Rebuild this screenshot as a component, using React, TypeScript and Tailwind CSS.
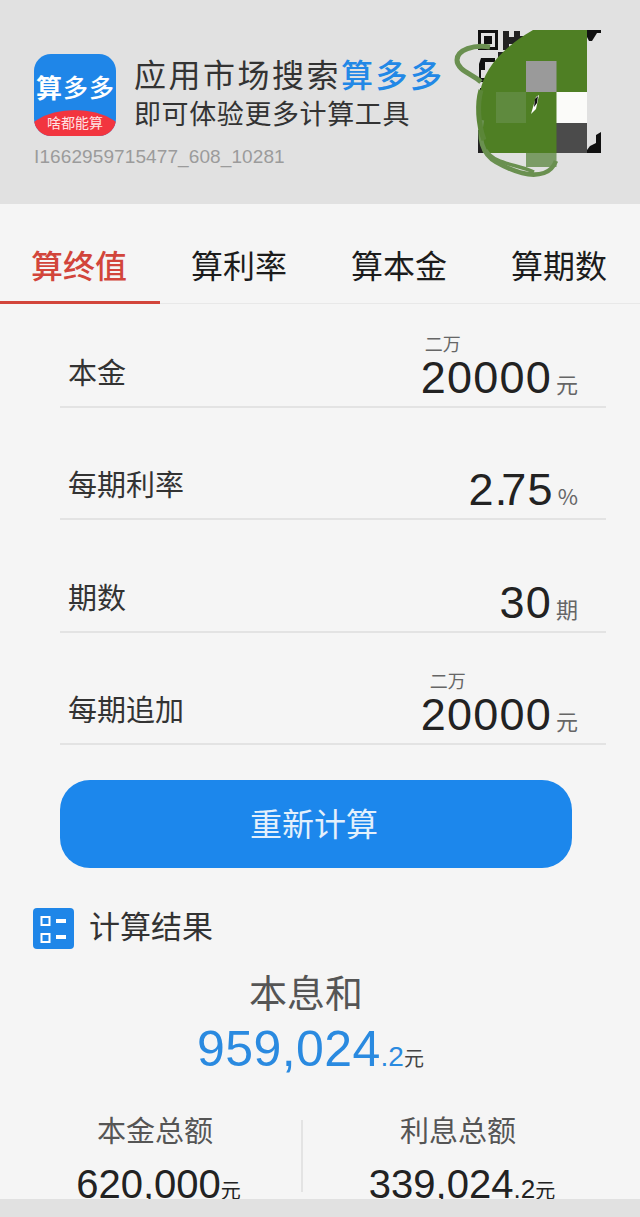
const CJK = '"Noto Sans CJK SC", "Liberation Sans", sans-serif';

function Logo() {
  return (
    <svg width="82" height="82" viewBox="0 0 82 82" className="shrink-0">
      <defs>
        <clipPath id="logo-clip">
          <rect width="82" height="82" rx="17" />
        </clipPath>
      </defs>
      <g clipPath="url(#logo-clip)">
        <rect width="82" height="82" fill="#1f86e8" />
        <ellipse cx="41" cy="90" rx="54" ry="34" fill="#f2353f" />
        <text x="2" y="44" fontSize="26" fontWeight="700" fill="#fff" style={{ fontFamily: CJK }}>算</text>
        <text x="29" y="43" fontSize="25" fontWeight="500" fill="#fff" style={{ fontFamily: CJK }}>多</text>
        <text x="55" y="43" fontSize="25" fontWeight="500" fill="#fff" style={{ fontFamily: CJK }}>多</text>
        <text x="41" y="74" fontSize="14" textAnchor="middle" fill="#ffe4e4" style={{ fontFamily: CJK }}>啥都能算</text>
      </g>
    </svg>
  );
}

// QR code hidden under green scribble and a mosaic, viewBox is in page coords
function ScribbledQr() {
  return (
    <svg width="170" height="176" viewBox="450 14 170 176" className="shrink-0">
      <rect x="478" y="30" width="20" height="20" fill="#111" />
      <rect x="481" y="33" width="14" height="14" fill="#e1e1e1" />
      <rect x="484" y="36" width="8" height="8" fill="#111" />
      <path d="M503 31h6v6h5v-6h6v5h6v8h-6v5h-5v-5h-6v6h-6z" fill="#222" />
      <path d="M481 58h14v4h-10v8h-4v8h6v4h-8v-18z" fill="#111" />
      <path d="M498 52h12v5h-6v6h-6zM480 88h12v6h-12z" fill="#222" />
      <path d="M581 30h20v3h-20zM585 33h12l-5 8h-3z" fill="#111" />
      <path d="M590 146l6-3v-8l5-3v21h-14v-3z" fill="#111" />
      <rect x="478" y="130" width="14" height="23" fill="#222" />
      <path d="M533 30h54v123h-104c-3-20-5-40-3-60 3-22 20-44 53-63z" fill="#4f7f24" />
      <rect x="526" y="61" width="30.5" height="31" fill="#9a9a9a" />
      <rect x="556.5" y="92" width="30.5" height="31" fill="#fbfbf9" />
      <rect x="556.5" y="123" width="30.5" height="30" fill="#4b4b4b" />
      <rect x="496" y="92" width="30" height="31" fill="#5f8a3e" />
      <rect x="526" y="153" width="30.5" height="14" fill="#7b9c66" />
      <path d="M536 97l3-2-3 14-5 5z" fill="#fff" />
      <path d="M535 99l3-3-1 7-3 4z" fill="#111" />
      <path d="M490 47c-16-3-33 3-33 13 0 10 15 14 24 22" fill="none" stroke="#6a9050" strokeWidth="5" />
      <path d="M482 120c-4 18 0 34 14 42 14 8 34 16 48 11 6-2 10-7 12-12" fill="none" stroke="#6a9050" strokeWidth="4.5" />
      <path d="M486 150c8 14 30 14 48 22" fill="none" stroke="#6a9050" strokeWidth="3.5" />
      <path d="M481 90c-4 14-3 34 3 50" fill="none" stroke="#5b8638" strokeWidth="5" />
    </svg>
  );
}

function Row({ label, value, unit, hint, hintClass }: { label: string; value: React.ReactNode; unit: string; hint?: string; hintClass?: string }) {
  return (
    <div className="h-[112.5px] border-b-2 border-[#e3e3e3] pl-2 flex items-end justify-between pb-[16px] relative">
      <span className="text-[29px] leading-[40px] mb-[-1px] text-[#333]">{label}</span>
      <div className="flex items-baseline pr-[28px] mb-[-13px]">
        <span className="relative text-[45px] leading-[50px] tracking-[1.2px] text-[#222]" style={{ fontFamily: '"Liberation Sans", sans-serif' }}>
          {hint && <span className={`absolute top-[-22px] text-[18px] leading-[24px] tracking-normal text-[#666] ${hintClass}`} style={{ fontFamily: CJK }}>{hint}</span>}
          {value}
        </span>
        <span className="text-[22px] text-[#666] ml-[4px]">{unit}</span>
      </div>
    </div>
  );
}

export default function App() {
  const num = { fontFamily: '"Liberation Sans", sans-serif' };
  return (
    <div className="w-[640px] h-[1217px] overflow-hidden flex flex-col bg-[#f5f5f5]" style={{ fontFamily: CJK }}>
      {/* download banner */}
      <div className="h-[204px] shrink-0 bg-[#e1e1e1] flex items-start relative">
        <div className="pl-[34px] pt-[54px]">
          <div className="flex items-center">
            <Logo />
            <div className="ml-[18px] mt-[-8px]">
              <p className="text-[32px] leading-[44px] tracking-[2.5px] text-[#333] whitespace-nowrap">
                应用市场搜索<span className="text-[#2288e6] font-medium">算多多</span>
              </p>
              <p className="text-[27px] leading-[36px] tracking-[0.6px] text-[#333] whitespace-nowrap">即可体验更多计算工具</p>
            </div>
          </div>
          <p className="text-[19px] leading-[24px] mt-[9px] text-[#9b9b9b] tracking-[0.1px]" style={num}>I1662959715477_608_10281</p>
        </div>
        <div className="absolute right-[20px] top-[14px]">
          <ScribbledQr />
        </div>
      </div>

      {/* tabs */}
      <div className="h-[100px] shrink-0 flex border-b border-[#e8e8e8] relative">
        {["算终值", "算利率", "算本金", "算期数"].map((t, i) => (
          <div key={t} className={`w-[160px] flex items-center justify-center text-[32px] pt-[22px] pr-[2px] border-b-[3px] mb-[-1px] ${i === 0 ? "text-[#d2453b] border-[#d2453b] font-medium" : "text-[#1c1c1c] border-transparent"}`}>
            {t}
          </div>
        ))}
      </div>

      {/* form */}
      <div className="pl-[60px] pr-[34px] mt-[-9px]">
        <Row label="本金" value="20000" unit="元" hint="二万" hintClass="left-[4px]" />
        <Row label="每期利率" value={<>2<span className="tracking-[-6px]">.</span>75</>} unit="%" />
        <Row label="期数" value="30" unit="期" />
        <Row label="每期追加" value="20000" unit="元" hint="二万" hintClass="left-[9px]" />
      </div>

      <div className="pl-[60px] pr-[68px] mt-[35px]">
        <button className="w-full h-[88px] rounded-[30px] bg-[#1c87ec] text-[#e3f0fc] text-[32px] pb-[4px] pr-[4px]">重新计算</button>
      </div>

      {/* result */}
      <div className="flex items-center pl-[33px] mt-[39px] h-[42px] shrink-0">
        <svg width="41" height="41" viewBox="0 0 41 41" className="shrink-0">
          <rect width="41" height="41" rx="4" fill="#1f86e8" />
          <rect x="8.5" y="9" width="8" height="8" fill="none" stroke="#fff" strokeWidth="2" />
          <rect x="8.5" y="26" width="8" height="8" fill="none" stroke="#fff" strokeWidth="2" />
          <rect x="23" y="11" width="10" height="4" fill="#fff" />
          <rect x="23" y="27" width="10" height="4" fill="#fff" />
        </svg>
        <span className="ml-[15px] mb-[6px] text-[31px] text-[#333]">计算结果</span>
      </div>

      <div className="text-center w-[612px] mt-[17px]">
        <p className="text-[38px] leading-[50px] text-[#555]">本息和</p>
        <p className="leading-[62px] mt-[2px] pl-[9px] text-[#2a8ae0]" style={num}>
          <span className="text-[50px] tracking-[0.4px]">959,024</span>
          <span className="text-[28px]">.2</span>
          <span className="text-[20px] text-[#444]" style={{ fontFamily: CJK }}>元</span>
        </p>
      </div>

      <div className="flex-1 min-h-0 overflow-hidden mt-[17px] flex">
        <div className="w-[310px] text-center">
          <p className="text-[29px] leading-[40px] text-[#555]">本金总额</p>
          <p className="leading-[50px] mt-[10px] pl-[7px] text-[#222]" style={num}>
            <span className="text-[40px]">620,000</span>
            <span className="text-[20px]" style={{ fontFamily: CJK }}>元</span>
          </p>
        </div>
        <div className="w-[2px] h-[72px] mt-[11px] bg-[#e3e3e3] ml-[-9px]" />
        <div className="w-[310px] text-center">
          <p className="text-[29px] leading-[40px] text-[#555]">利息总额</p>
          <p className="leading-[50px] mt-[10px] pl-[8px] text-[#222]" style={num}>
            <span className="text-[40px]">339,024</span>
            <span className="text-[26px]">.2</span>
            <span className="text-[20px]" style={{ fontFamily: CJK }}>元</span>
          </p>
        </div>
      </div>
      <div className="h-[18px] shrink-0 bg-[#e1e1e1]" />
    </div>
  );
}
